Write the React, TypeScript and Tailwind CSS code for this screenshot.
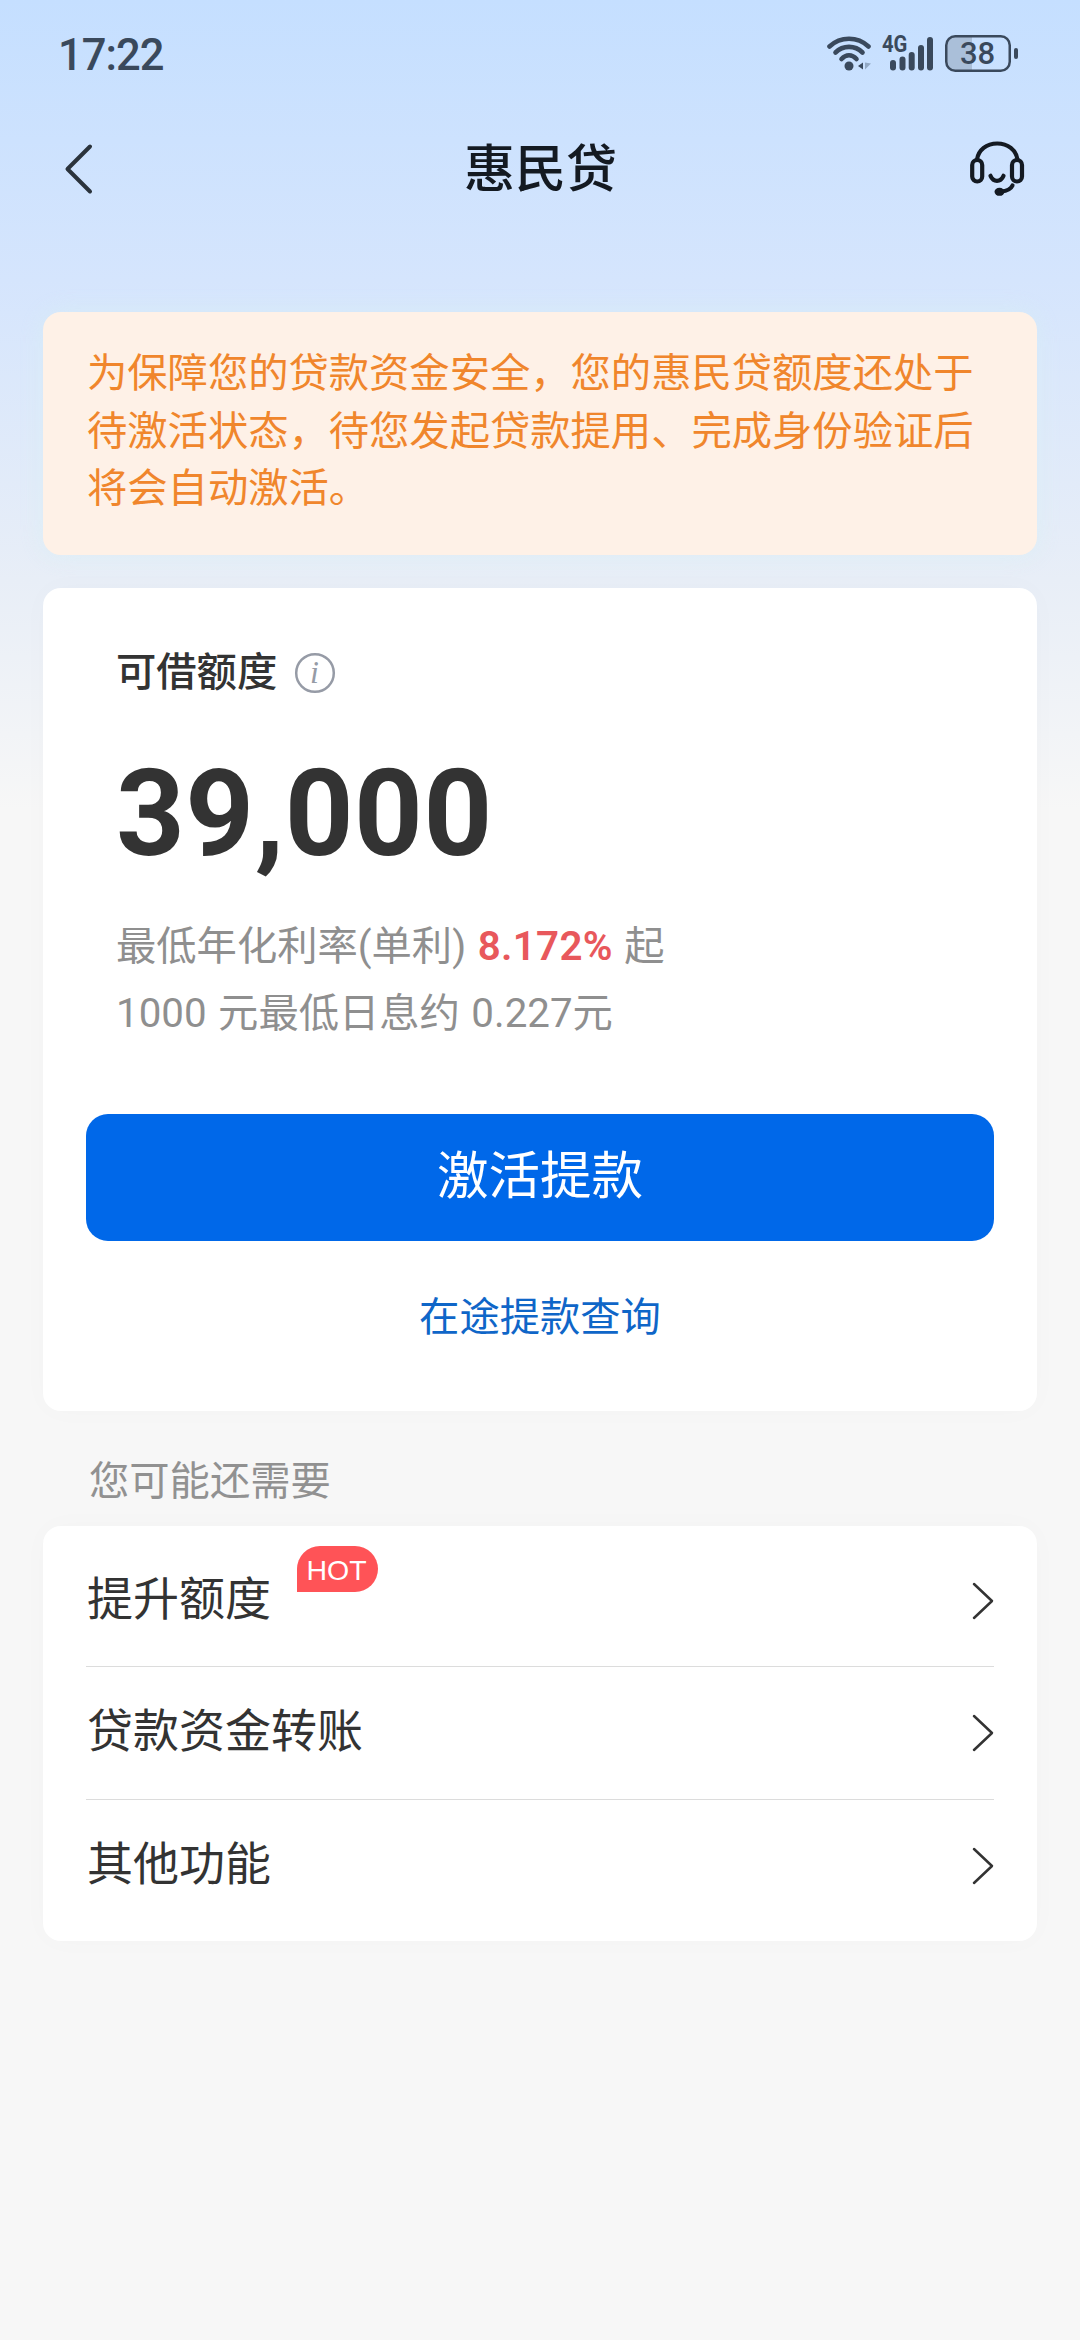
import { clsx } from "clsx";

const menuItems = [
  { label: "提升额度", hot: true, height: "h-[141px] pt-[9px]" },
  { label: "贷款资金转账", hot: false, height: "h-[133px]" },
  { label: "其他功能", hot: false, height: "h-[141px] pb-[9px]" },
];

function WifiIcon() {
  return (
    <svg width="46" height="36" viewBox="0 0 46 36" className="-mr-[2px]" fill="none" stroke="#3a495c" strokeWidth="4.600" strokeLinecap="round">
      <path d="M2.500 10.500C13.500 .2 30.500 .2 41.500 10.500" />
      <path d="M8.500 16.500C16 9 28 9 35.500 16.500" />
      <path d="M14.500 23C19 18 25 18 29.500 23" />
      <circle cx="22" cy="30" r="4.500" fill="#3a495c" stroke="none" />
      <path d="M36 26.500v7l-5-3.500z" fill="#3a495c" stroke="none" />
      <path d="M38 26.500v7l6-6z" fill="#93a9c4" stroke="none" />
    </svg>
  );
}

function SignalIcon() {
  return (
    <div className="relative">
      <svg width="52" height="36" viewBox="0 0 52 36" fill="#3a495c">
        <rect x="8" y="24" width="6" height="10.500" rx="3" />
        <rect x="17.500" y="20.500" width="6" height="14" rx="3" />
        <rect x="26.700" y="16" width="6" height="18.500" rx="3" />
        <rect x="36" y="9" width="6" height="25.500" rx="3" />
        <rect x="45" y="1" width="6" height="33.500" rx="3" />
      </svg>
      <span className="absolute -top-[5px] left-0 origin-left scale-x-[.88] text-[23px] leading-[27px] font-bold text-[#3a495c]">4G</span>
    </div>
  );
}

function BatteryIcon() {
  return (
    <div className="relative">
      <svg width="74" height="38" viewBox="0 0 74 38">
        <path d="M10 1.500H27V35.500H10A8.500 8.500 0 0 1 1.500 27V10A8.500 8.500 0 0 1 10 1.500Z" fill="#aabfd9" />
        <rect x="1.250" y="1.250" width="63.500" height="34.500" rx="9" fill="none" stroke="#3a495c" strokeWidth="2.500" />
        <rect x="69" y="13" width="4" height="11" rx="2" fill="#3a495c" />
      </svg>
      <span className="absolute top-0 left-0 w-[65px] text-center text-[31px] leading-[38px] font-medium text-[#3a495c]">38</span>
    </div>
  );
}

function HeadsetIcon() {
  return (
    <svg width="56" height="58" viewBox="0 0 56 58" fill="none" stroke="#141a22" strokeWidth="4.200" strokeLinecap="round">
      <path d="M8 18.500C9.500 9 17.500 2.500 28.200 2.500S47 9 48.500 18.500" />
      <rect x="3.200" y="19" width="10" height="21.500" rx="5" />
      <rect x="43" y="19" width="10" height="21.500" rx="5" />
      <path d="M21.500 34.800C24.500 41.500 31.500 41.500 34.500 34.800" />
      <path d="M43.500 44.500C42 48 37 50 32 50.500" />
      <ellipse cx="30.500" cy="50.800" rx="5" ry="4" fill="#141a22" stroke="none" />
    </svg>
  );
}

function ChevronRight() {
  return (
    <svg width="22" height="38" viewBox="0 0 22 38" fill="none" stroke="#333" strokeWidth="2.500" strokeLinecap="round" strokeLinejoin="round">
      <path d="M2 2L20 19L2 36" />
    </svg>
  );
}

export default function App() {
  return (
    <div
      lang="zh-CN"
      className="flex h-[2340px] w-[1080px] flex-col bg-[#f7f7f7] bg-[linear-gradient(180deg,#c5dfff_0px,#d5e5fd_280px,#e8eef7_580px,#f7f7f7_810px)] font-[Roboto,'Noto_Sans_CJK_SC',sans-serif] text-[#333]"
    >
      {/* Status bar */}
      <div className="flex h-[108px] items-center justify-between pl-[58px] pr-[61px]">
        <span className="pt-[3px] text-[43.500px] leading-none font-medium tracking-[-1px] text-[#3a495c]">17:22</span>
        <div className="flex items-center gap-[11px]">
          <WifiIcon />
          <SignalIcon />
          <BatteryIcon />
        </div>
      </div>

      {/* Header */}
      <header className="flex h-[124px] items-center justify-between pr-[55px] pl-[63px]">
        <button className="flex w-14 pb-[2px]">
          <svg width="32" height="52" viewBox="0 0 32 52" fill="none" stroke="#2b333c" strokeWidth="4" strokeLinecap="round" strokeLinejoin="round">
            <path d="M27 3.500L4.500 26L27 48.500" />
          </svg>
        </button>
        <h1 className="mr-[7px] pb-px text-[51px] leading-none font-medium text-[#141a22]">惠民贷</h1>
        <button>
          <HeadsetIcon />
        </button>
      </header>

      <main className="flex flex-col px-[43px] pt-20">
        <div className="h-[243px] rounded-[18px] bg-[#fef1e7] pt-[33px] pl-[44px] text-[40.3px] leading-[57.500px] whitespace-nowrap text-[#f0862c] shadow-[0_0_24px_rgba(215,240,245,0.6)]">
          <p>为保障您的贷款资金安全，您的惠民贷额度还处于</p>
          <p>待激活状态，待您发起贷款提用、完成身份验证后</p>
          <p>将会自动激活。</p>
        </div>

        {/* Available credit */}
        <section className="mt-[33px] flex h-[823px] flex-col rounded-[18px] bg-white px-[43px] shadow-[0_0_30px_rgba(0,0,0,0.02)]">
          <div className="flex items-center gap-[17px] pt-[56px] pl-[30px]">
            <span className="text-[40.3px] leading-[58px] font-medium">可借额度</span>
            <svg width="42" height="42" viewBox="0 0 42 42">
              <circle cx="21" cy="21" r="18.800" fill="none" stroke="#969ba6" strokeWidth="2.500" />
              <text x="20.500" y="31" fontSize="32" fontStyle="italic" textAnchor="middle" fill="#969ba6" fontFamily="Liberation Serif, serif">
                i
              </text>
            </svg>
          </div>
          <p className="mt-[42px] pl-[30px] text-[120px] leading-[140px] font-bold tracking-[0.5px]">39,000</p>
          <div className="mt-[29px] pl-[30px] text-[40.3px] leading-[67px] text-[#8f8f8f] [word-spacing:1.500px]">
            <p>
              最低年化利率(单利) <span className="font-semibold tracking-[0.3px] text-[#e8585c]">8.172%</span> 起
            </p>
            <p>1000 元最低日息约 0.227元</p>
          </div>
          <button className="mt-[67px] h-[127px] rounded-[22px] bg-[#0068e9] pb-[2px] text-[51.500px] text-white">
            激活提款
          </button>
          <button className="mt-[48px] text-[40.3px] leading-[58px] text-[#0f66c8]">在途提款查询</button>
        </section>

        <h2 className="mt-[42px] pl-[46px] text-[40.3px] leading-[58px] text-[#919191]">您可能还需要</h2>

        <ul className="mt-[15px] h-[415px] rounded-[18px] bg-white px-[43px] shadow-[0_0_30px_rgba(0,0,0,0.02)]">
          {menuItems.map((item, i) => (
            <li
              key={item.label}
              className={clsx(
                "relative flex items-center justify-between",
                item.height,
                i < menuItems.length - 1 && "border-b border-[#dcdcdc]"
              )}
            >
              <span className="pb-[4px] pl-px text-[46px] leading-none">{item.label}</span>
              {item.hot && (
                <span className="absolute top-[20px] left-[211px] flex h-[46px] w-[81px] items-center justify-center rounded-[23px] rounded-bl-none bg-[#ff5357] pt-[2px] pr-[2px] font-['Liberation_Sans',sans-serif] text-[28.500px] text-white">
                  HOT
                </span>
              )}
              <ChevronRight />
            </li>
          ))}
        </ul>
      </main>
    </div>
  );
}
